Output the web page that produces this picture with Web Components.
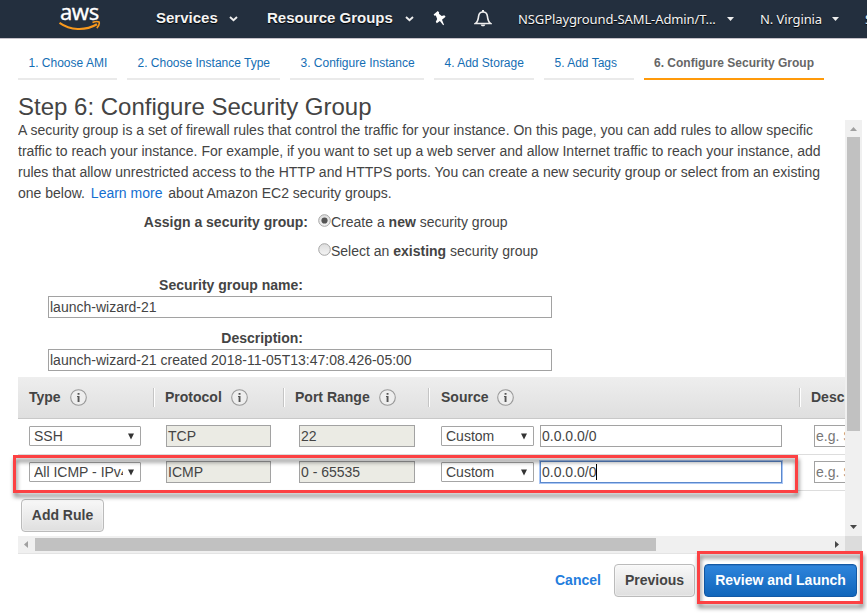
<!DOCTYPE html>
<html lang="en">
<head>
<meta charset="utf-8">
<title>Configure Security Group</title>
<style>
html,body{margin:0;height:614px;overflow:hidden;background:#fff}
body{font:14px/21px "Liberation Sans",Arial,sans-serif;color:#444}
</style>
</head>
<body>
<launch-page></launch-page>
<script>
const define = (name, html, setup) => customElements.define(name, class extends HTMLElement {
  connectedCallback() {
    if (this.shadowRoot) return;
    const t = document.createElement('template');
    t.innerHTML = html;
    this.attachShadow({mode: 'open'}).appendChild(t.content.cloneNode(true));
    if (setup) setup(this, this.shadowRoot);
  }
});

define('info-icon', `<style>:host{display:block;width:17px;height:17px}svg{display:block}</style>
<svg width="17" height="17" viewBox="0 0 17 17"><circle cx="8.5" cy="8.5" r="7.8" fill="#eee" stroke="#999" stroke-width="1.1"/><path d="M7 7h2.5v6h-1.9V8H7zM7.6 4h1.9v1.8H7.6z" fill="#555"/></svg>`);

define('nav-caret', `<style>:host{display:block}svg{display:none}:host([chevron]) .c{display:block}:host(:not([chevron])) .t{display:block}</style>
<svg class="c" width="9" height="6" viewBox="0 0 9 6"><path d="M1 1l3.5 3.3L8 1" fill="none" stroke="#eee" stroke-width="1.9"/></svg>
<svg class="t" width="7" height="4" viewBox="0 0 7 4"><path d="M0 0h7L3.5 4z" fill="#eee"/></svg>`);

define('aws-logo', `<style>
:host{display:block;width:42px;height:30px}
.w{font:22px/22px "Noto Sans","Open Sans",sans-serif;color:#fff;letter-spacing:-.5px;height:20px;padding-left:1px;margin-top:-1px;-webkit-text-stroke:.3px #fff}
svg{display:block}</style>
<div class="w">aws</div>
<svg width="42" height="12" viewBox="0 0 42 12"><path d="M.5 2.8C11 10.4 26 11.2 38 4.3" fill="none" stroke="#f7981d" stroke-width="2.2"/><path d="M33.5 2.5c2.3-1 5.5-1.1 6.6-.5.5 1.5-.5 4.2-2.3 6.1" fill="none" stroke="#f7981d" stroke-width="1.6"/></svg>`);

define('top-nav', `<style>
:host{display:flex;align-items:center;height:39px;background:#232f3e;border-bottom:1px solid #c5c1c9;color:#f4f4f4;overflow:hidden;white-space:nowrap;box-sizing:border-box}
b{font-size:15px;text-shadow:0 1px 1px #000;margin-top:-3px}
.s{font:13px/18px "Noto Sans","Open Sans",sans-serif;text-shadow:0 1px 1px #000;letter-spacing:-.1px;margin-top:-1px}
aws-logo{margin-left:59px;align-self:flex-start;margin-top:1px}
svg{display:block;flex:none}
b,.s,nav-caret,aws-logo{flex:none}
</style>
<aws-logo></aws-logo>
<b style="margin-left:55px;width:73px">Services</b><nav-caret chevron></nav-caret>
<b style="margin-left:29px;width:138px">Resource Groups</b><nav-caret chevron></nav-caret>
<svg style="margin-left:19px;margin-top:-2px" width="14" height="16" viewBox="0 0 14 16"><path d="M.6 4.4L4.8 1l1.4 1.5-.3 1.2 2.8 2.3 2.6-.8 1.3 1.6-3.6 2.9 2 5-.8.5-3.3-4.3-3.1 2.3-1-1.5 1.4-2.6L2.8 5.6l-1.3.2z" fill="#fff"/></svg>
<svg style="margin-left:27px;margin-top:-2px" width="18" height="18" viewBox="0 0 18 18"><path d="M1.5 14.5c2.5-1.6 2.8-4.3 3.1-7.3C4.9 4.5 6.6 3 9 3s4.1 1.5 4.4 4.2c.3 3 .6 5.7 3.1 7.3z" fill="none" stroke="#eee" stroke-width="1.6"/><path d="M6.7 15.4h4.6c-.3 2.5-4.3 2.5-4.6 0M8 1h2v2H8z" fill="#eee"/></svg>
<span class="s" style="margin-left:26px;width:209px">NSGPlayground-SAML-Admin/T...</span><nav-caret></nav-caret>
<span class="s" style="margin-left:26px;width:72px">N. Virginia</span><nav-caret></nav-caret>
<span class="s" style="margin-left:26px">S</span>`);

define('step-tab', `<style>
:host{display:block;box-sizing:border-box;height:32px;padding-left:10.5px;border-bottom:2px solid #eaeaea;font-size:12px;line-height:31px;color:#146eb4;white-space:nowrap}
:host([active]){border-color:#ff9a0a;color:#666;font-weight:bold;padding-left:10px}
</style><slot></slot>`);

define('step-tabs', `<style>
:host{display:grid;grid-template-columns:99px 153px 134px 100px 90px 180px;gap:10px;padding:9px 0 0 18px}
</style>
<step-tab>1. Choose AMI</step-tab><step-tab>2. Choose Instance Type</step-tab><step-tab>3. Configure Instance</step-tab><step-tab>4. Add Storage</step-tab><step-tab>5. Add Tags</step-tab><step-tab active>6. Configure Security Group</step-tab>`);

define('radio-dot', `<style>
:host{display:block;width:13px;height:13px}svg{display:block}circle.d{display:none}:host([checked]) circle.d{display:block}</style>
<svg width="13" height="13"><defs><linearGradient id="g" x2="0" y2="1"><stop stop-color="#ddd"/><stop offset="1" stop-color="#f4f4f4"/></linearGradient></defs><circle cx="6.5" cy="6.5" r="5.8" fill="url(#g)" stroke="#a5a5a5"/><circle class="d" cx="6.5" cy="6.5" r="3.1" fill="#555"/></svg>`);

define('text-box', `<style>
:host{display:block;box-sizing:border-box;height:22px;border:1px solid #a2a2a2;padding-left:1px;line-height:20px;background:#fff;white-space:nowrap;overflow:hidden;color:#444}
:host([disabled]){background:#ebebe4}
:host([hint]){color:#777}
:host([focused]){border-color:#5b88cc;box-shadow:0 0 0 1px #a9c6f5}
i{display:none;width:1px;height:16px;background:#000;vertical-align:-3px;margin-left:-1px}
:host([focused]) i{display:inline-block}
</style><slot></slot><i></i>`);

define('select-box', `<style>
:host{display:flex;box-sizing:border-box;height:20px;border:1px solid #a5a5a5;padding:0 6px 0 4px;line-height:19px;background:#fff;align-items:center;border-radius:1px}
span{flex:1;min-width:0;overflow:hidden;white-space:nowrap;margin-right:5px}svg{flex:none}
</style><span><slot></slot></span><svg width="6" height="7" viewBox="0 0 6 7"><path d="M0 .5h6L3 6.5z" fill="#333"/></svg>`);

define('rules-head', `<style>
:host{display:grid;grid-template-columns:137px 130px 145px 371px 200px;height:42px;box-sizing:border-box;background:linear-gradient(#eee,#dfdfdf);border-bottom:1px solid #c8c8c8;align-items:center}
div{display:flex;align-items:center;box-sizing:border-box;padding-left:10px;height:19px;border-right:1px solid #fff;font-weight:bold;box-shadow:inset -1px 0 #c5c5c5}
div:nth-of-type(1),div:nth-of-type(4){padding-left:11px}
div:last-child{border:0;box-shadow:none}
info-icon{margin-left:9px}
</style>
<div>Type<info-icon></info-icon></div><div>Protocol<info-icon></info-icon></div><div>Port Range<info-icon></info-icon></div><div>Source<info-icon></info-icon></div><div>Description</div>`);

define('rule-row', `<style>
:host{display:grid;grid-template-columns:112px 105px 116px 93px 242px 120px;padding-left:11px;padding-top:6px;align-items:start;height:36px;box-sizing:border-box;border-bottom:1px solid #ddd}
select-box{margin-top:1px}
.p{margin-left:25px;margin-right:-25px}.r{margin-left:53px;margin-right:-53px}.c{margin-left:79px;margin-right:-79px}.a{margin-left:85px;margin-right:-85px}.h{margin-left:117px;margin-right:-117px}
</style>
<select-box class="t"></select-box><text-box disabled class="p"></text-box><text-box disabled class="r"></text-box><select-box class="c">Custom</select-box><text-box class="a">0.0.0.0/0</text-box><text-box hint class="h">e.g. SSH for Admin</text-box>`, (el, r) => {
  r.querySelector('.t').textContent = el.getAttribute('type');
  r.querySelector('.p').textContent = el.getAttribute('protocol');
  r.querySelector('.r').textContent = el.getAttribute('ports');
  if (el.hasAttribute('focused')) r.querySelector('.a').setAttribute('focused', '');
});

define('push-button', `<style>
:host{display:block;box-sizing:border-box;height:33px;border:1px solid #bbb;border-radius:4px;background:linear-gradient(#f8f8f8,#dfdfdf);font-weight:bold;line-height:30px;text-align:center;white-space:nowrap;box-shadow:inset 0 0 0 1px rgba(255,255,255,.35)}
:host([primary]){background:linear-gradient(#2f85dc,#1166bb);border-color:#1359a5;color:#fff;box-shadow:inset 0 1px #2975c7}
</style><slot></slot>`);

define('security-form', `<style>
:host{display:block}
p{margin:0;white-space:nowrap}
a{color:#146ed0}
.row{display:flex;height:29px;line-height:29px;white-space:nowrap}
.l{width:290px;text-align:right;font-weight:bold}
radio-dot{margin:6px 0 0 10px}
.f{width:285px;text-align:right;font-weight:bold;line-height:22px;height:22px}
text-box{margin-left:30px;width:504px}
</style>
<p>A security group is a set of firewall rules that control the traffic for your instance. On this page, you can add rules to allow specific<br>traffic to reach your instance. For example, if you want to set up a web server and allow Internet traffic to reach your instance, add<br>rules that allow unrestricted access to the HTTP and HTTPS ports. You can create a new security group or select from an existing<br>one below. <a style="margin:0 2px">Learn more</a> about Amazon EC2 security groups.</p>
<div class="row" style="margin-top:4px"><span class="l">Assign a security group:</span><radio-dot checked></radio-dot><span>Create a <b>new</b> security group</span></div>
<div class="row"><span class="l"></span><radio-dot></radio-dot><span>Select an <b>existing</b> security group</span></div>
<div class="f" style="margin-top:8px">Security group name:</div><text-box>launch-wizard-21</text-box>
<div class="f" style="margin-top:9px">Description:</div><text-box>launch-wizard-21 created 2018-11-05T13:47:08.426-05:00</text-box>`);

define('scroll-bar', `<style>
:host{display:flex;background:#f0f0f0;box-sizing:border-box;align-items:center}
:host([vertical]){flex-direction:column;width:17px;padding:7px 0 7px}
:host([horizontal]){height:18px;padding:0 6px 1px 6px;border-bottom:1px solid #e4e4e4}
i{background:#c1c1c1;display:block}
:host([vertical]) i{width:13px;height:294px;margin:6px 0 auto}
:host([horizontal]) i{height:13px;width:621px;margin:0 auto 0 7px}
svg{display:none}:host([vertical]) .v{display:block}:host([horizontal]) .h{display:block}
</style>
<svg class="v" width="7" height="4"><path d="M0 4h7L3.5 0z" fill="#a0a0a0"/></svg><svg class="h" width="4" height="7"><path d="M4 0v7L0 3.5z" fill="#a0a0a0"/></svg><i></i><svg class="v" width="7" height="4"><path d="M0 0h7L3.5 4z" fill="#484848"/></svg><svg class="h" width="4" height="7"><path d="M0 0v7l4-3.5z" fill="#484848"/></svg>`);

define('red-frame', `<style>
:host{position:absolute;box-sizing:border-box;border:3px solid #fc4143;filter:drop-shadow(1px 4px 2px rgba(0,0,0,.5));pointer-events:none}
</style>`);

define('launch-page', `<style>
:host{display:block;position:relative;width:867px;height:614px;overflow:hidden}
h1{font-size:24px;font-weight:normal;line-height:30px;height:30px;margin:12px 0 0 18px}
main{display:grid;grid-template-columns:827px 17px;grid-template-rows:416px 18px;margin-left:18px;height:434px;margin-top:-2px}
.pane{overflow:hidden;min-width:0}
.corner{background:#dcdcdc;height:15px}
security-form{height:257px}
.add{width:83px;margin:8px 0 0 3px}
footer{display:flex;padding-left:555px;margin-top:10px;align-items:center}
footer a{font-weight:bold;color:#237ddd;width:59px}
.frame1{left:13px;top:455px;width:785px;height:38px}
.frame2{left:697px;top:551px;width:166px;height:53px}
</style>
<top-nav></top-nav><step-tabs></step-tabs><h1>Step 6: Configure Security Group</h1>
<main>
<div class="pane"><security-form></security-form><rules-head></rules-head>
<rule-row type="SSH" protocol="TCP" ports="22"></rule-row>
<rule-row type="All ICMP - IPv4" protocol="ICMP" ports="0 - 65535" focused></rule-row>
<push-button class="add">Add Rule</push-button></div>
<scroll-bar vertical></scroll-bar><scroll-bar horizontal></scroll-bar><div class="corner"></div>
</main>
<footer><a>Cancel</a><push-button style="width:81px">Previous</push-button><push-button primary style="width:153px;margin-left:9px">Review and Launch</push-button></footer>
<red-frame class="frame1"></red-frame><red-frame class="frame2"></red-frame>`);
</script>
</body>
</html>
